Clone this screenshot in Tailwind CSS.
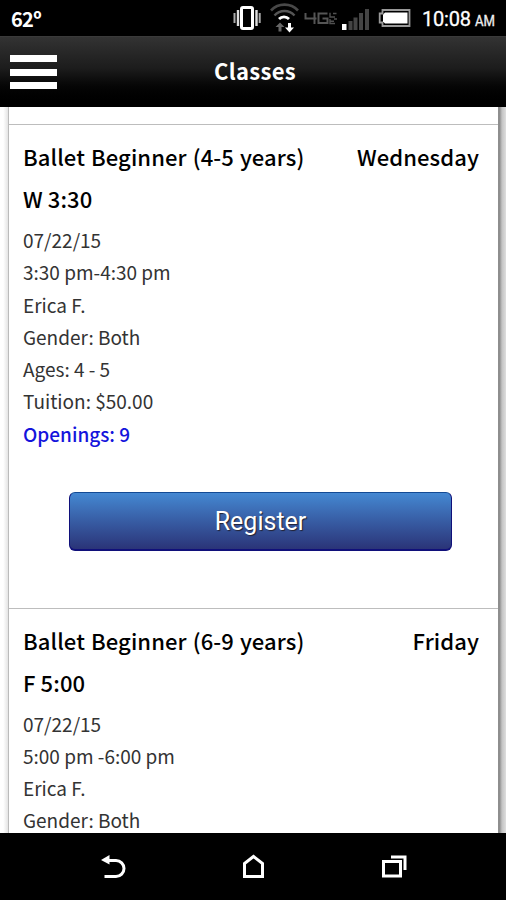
<!DOCTYPE html>
<html lang="en">
<head>
    <meta charset="UTF-8">
    <meta name="viewport" content="width=device-width, initial-scale=1.0">
    <title>Classes</title>
    <script src="https://cdn.jsdelivr.net/npm/@tailwindcss/browser@4"></script>
</head>
<body class="h-[900px] w-[506px] overflow-hidden flex flex-col bg-black text-black font-['Noto_Sans_CJK_SC',sans-serif]">
    <!-- Status bar -->
    <div class="h-9 shrink-0 flex items-center justify-between bg-black text-white pl-[11px] pr-[10px]">
        <span class="text-[20px] font-bold leading-9 pt-0.5 tracking-[-0.7px]">62º</span>
        <div class="flex items-center">
            <svg class="w-[264px] h-9" viewBox="232 0 264 36" fill="none">
                <!-- vibrate -->
                <rect x="241.500" y="7.500" width="11" height="21" rx="1.500" stroke="#fff" stroke-width="3"/>
                <path d="M238 10v16M256.500 10v16" stroke="#ddd" stroke-width="2.400"/>
                <path d="M234.500 13v10M259.700 13v10" stroke="#aaa" stroke-width="2"/>
                <!-- wifi -->
                <path d="M271 11.500a18.500 18.500 0 0 1 27 0" stroke="#484848" stroke-width="2.600" transform="translate(0 -1)"/>
                <path d="M274.500 15.500a13.500 13.500 0 0 1 20 0" stroke="#555" stroke-width="2.400"/>
                <path d="M279 19a7 7 0 0 1 10 0" stroke="#fff" stroke-width="2.800"/>
                <path d="M280 22.500l4.500 4.500h-3v4.500h-3V27h-3z" fill="#666"/>
                <path d="M289.500 32.500l-4.500-5h3V23h3v4.500h3z" fill="#fff"/>
                <!-- 4G LTE -->
                <path d="M305.500 13v5.500h11M314.500 12.500v11.500M327.500 13.500h-9v9.500h9v-4.500h-5" stroke="#555" stroke-width="2"/>
                <path d="M330 12.800v4.200h5M330 19v4.500h5M330 21.200h4M333 13.500h3.500M337 19h-3" stroke="#505050" stroke-width="1.400"/>
                <!-- signal -->
                <path d="M342 24h4.500v6H342z" fill="#fff"/>
                <path d="M348.500 21h4v9h-4zM353.500 17.500h4V30h-4zM359 13h4v17h-4zM365 9h4v21h-4z" fill="#444"/>
                <!-- battery -->
                <path d="M382.500 10h27v16h-27v-3.500h-2.800v-9h2.800z" stroke="#999" stroke-width="1.800"/>
                <path d="M385 12.500h22.500v11H385l-2-2v-7z" fill="#fff"/>
                <text x="422" y="26" fill="#fff" stroke="#fff" stroke-width="0.300" font-size="20" textLength="49" class="font-['Roboto',sans-serif]">10:08</text>
                <text x="475" y="26" fill="#eee" stroke="#eee" stroke-width="0.300" font-size="14" textLength="20" lengthAdjust="spacingAndGlyphs" class="font-['Roboto',sans-serif]">AM</text>
            </svg>
        </div>
    </div>

    <!-- Header -->
    <header class="h-[71px] shrink-0 grid grid-cols-[1fr_auto_1fr] items-center bg-linear-to-b from-[#333] via-[#1c1c1c] via-45% to-black border-t border-[#3a3a3a] pl-2.5 pr-1.5">
        <button class="w-[47px] flex flex-col gap-[6.5px]" aria-label="Menu">
            <span class="h-[7px] bg-white"></span>
            <span class="h-[7px] bg-white"></span>
            <span class="h-[7px] bg-white"></span>
        </button>
        <h1 class="text-white text-[22px] font-bold leading-none tracking-[0.3px] pb-[5px]">Classes</h1>
        <span></span>
    </header>

    <!-- Class list -->
    <main class="h-[726px] shrink-0 overflow-hidden flex bg-white">
        <div class="w-[9px] shrink-0 border-r border-[#bbb] bg-linear-to-r from-white from-40% to-[#e4e4e4]"></div>
        <div class="flex-1 bg-white pt-[17px]">
            <section class="h-[483.5px] border-t border-[#bdbdbd] pt-2.5 pl-3.5 pr-[19px]">
                <div class="flex justify-between text-[22px] font-medium leading-[42px] tracking-[0.1px] [word-spacing:1px] whitespace-nowrap">
                    <h2>Ballet Beginner (4-5 years)</h2>
                    <span>Wednesday</span>
                </div>
                <h3 class="text-[22px] font-medium leading-[42px] tracking-[0.1px]">W 3:30</h3>
                <ul class="pt-[5px] text-[19px] font-normal leading-[32.3px] text-[#333]">
                    <li>07/22/15</li>
                    <li>3:30 pm-4:30 pm</li>
                    <li>Erica F.</li>
                    <li>Gender: Both</li>
                    <li>Ages: 4 - 5</li>
                    <li>Tuition: $50.00</li>
                    <li class="font-medium text-[#1414dc]">Openings: 9</li>
                </ul>
                <button class="mt-[42px] ml-[46px] w-[383px] h-[59px] pt-0.5 block rounded-md border border-b-2 border-[#10107a] border-t-[#134a94] bg-linear-to-b from-[#4488d2] to-[#2a3478] text-white text-[25px] font-['Roboto',sans-serif] text-shadow-[1px_1px_1px_#223]">Register</button>
            </section>
            <section class="border-t border-[#bdbdbd] pt-2.5 pl-3.5 pr-[19px]">
                <div class="flex justify-between text-[22px] font-medium leading-[42px] tracking-[0.1px] [word-spacing:1px] whitespace-nowrap">
                    <h2>Ballet Beginner (6-9 years)</h2>
                    <span>Friday</span>
                </div>
                <h3 class="text-[22px] font-medium leading-[42px] tracking-[0.1px]">F 5:00</h3>
                <ul class="pt-[5px] text-[19px] font-normal leading-[32.3px] text-[#333]">
                    <li>07/22/15</li>
                    <li>5:00 pm -6:00 pm</li>
                    <li>Erica F.</li>
                    <li class="h-6">Gender: Both</li>
                </ul>
            </section>
        </div>
        <div class="w-[8px] shrink-0 bg-linear-to-r from-[#8e8e8e] from-20% via-[#c4c4c4] via-50% to-[#dedede]"></div>
    </main>

    <!-- Navigation bar -->
    <nav class="flex-1 bg-black">
        <svg class="w-full h-[67px]" viewBox="0 833 506 67" fill="none" stroke="#fff" stroke-width="3">
            <path d="M106 860.500h10a8 8 0 0 1 0 16h-11.500"/>
            <path d="M101 860l8.500-5v9.500z" fill="#fff" stroke="none"/>
            <path d="M244.500 876.500v-13l9-7 9 7v13z"/>
            <path d="M383.500 861.500h17V876h-17zM391 857h14v13"/>
        </svg>
    </nav>
</body>
</html>
